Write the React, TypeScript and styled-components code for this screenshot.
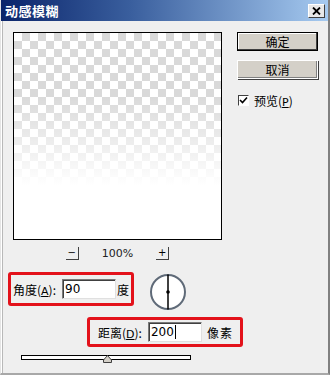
import React from "react";
import styled, { createGlobalStyle } from "styled-components";

const Global = createGlobalStyle`
  html, body { margin: 0; padding: 0; background: #efefef; }
  body { font-family: "Liberation Sans", "Noto Sans CJK SC", sans-serif; font-size: 12px; color: #000; }
`;

const Window = styled.div`
  width: 330px;
  height: 375px;
  box-sizing: border-box;
  background: #efefef;
  border-left: 1px solid #e4e4e4;
  border-right: 2px solid #808080;
  border-bottom: 2px solid #a8a8a8;
  box-shadow: inset 1px 0 0 #fff, inset 2px 0 0 #b8b8b8;
  display: flex;
  flex-direction: column;
  overflow: hidden;
`;

const TitleBar = styled.div`
  height: 21px;
  flex: none;
  margin-left: -1px;
  background: linear-gradient(to right, #0a246a 0%, #3a5f9e 40%, #a6caf0 100%);
  display: flex;
  align-items: center;
  justify-content: space-between;
  padding: 0 3px 0 5px;
`;

const Title = styled.span`
  color: #fff;
  font-family: "Noto Sans CJK SC", sans-serif;
  font-weight: 700;
  font-size: 13px;
  letter-spacing: 0.5px;
`;

const CloseBtn = styled.div`
  width: 15px;
  height: 12px;
  background: #e8e8e8;
  border: 1px solid;
  border-color: #fff #404040 #404040 #fff;
  display: flex;
  align-items: center;
  justify-content: center;
`;

const Body = styled.div`
  flex: 1;
  padding: 11px 0 0 12px;
  display: flex;
  flex-direction: column;
`;

const TopRow = styled.div`
  display: flex;
  align-items: flex-start;
`;

const PreviewCol = styled.div`
  width: 209px;
  display: flex;
  flex-direction: column;
`;

const Preview = styled.div`
  width: 209px;
  height: 208px;
  box-sizing: border-box;
  border: 1px solid #000;
  background:
    linear-gradient(to bottom, rgba(255,255,255,0) 0%, rgba(255,255,255,0) 30%, rgba(255,255,255,1) 74%),
    repeating-conic-gradient(#d9d9d9 0 25%, #ffffff 0 50%) 0 0 / 16px 16px;
`;

const ZoomRow = styled.div`
  display: flex;
  align-items: center;
  justify-content: center;
  gap: 23px;
  margin-top: 7px;
  height: 13px;
`;

const ZoomBtn = styled.div`
  width: 12px;
  height: 12px;
  border-right: 1px solid #404040;
  border-bottom: 1px solid #404040;
  font-family: "DejaVu Sans", sans-serif;
  font-size: 10px;
  line-height: 10px;
  display: flex;
  align-items: center;
  justify-content: center;
`;

const ZoomText = styled.span`
  font-family: "DejaVu Sans", sans-serif;
  font-size: 11px;
  color: #222;
`;

const SideCol = styled.div`
  margin-left: 15px;
  display: flex;
  flex-direction: column;
`;

const Button = styled.div<{ $def?: boolean }>`
  width: 81px;
  height: 19px;
  box-sizing: border-box;
  background: #d4d0c8;
  border: 1px solid ${(p) => (p.$def ? "#000" : "#fff")};
  box-shadow: ${(p) =>
    p.$def
      ? "inset -1px -1px 0 #404040, inset 1px 1px 0 #fff"
      : "1px 1px 0 #404040, inset -1px -1px 0 #808080"};
  display: flex;
  align-items: center;
  justify-content: center;
  font-family: "Noto Sans CJK SC", sans-serif;
  font-size: 12px;
  margin-bottom: 9px;
`;

const CheckRow = styled.label`
  display: flex;
  align-items: center;
  gap: 5px;
  margin-top: 4px;
  margin-left: 1px;
  font-family: "Noto Sans CJK SC", sans-serif;
  font-size: 12px;
`;

const CheckBox = styled.span`
  width: 11px;
  height: 11px;
  box-sizing: border-box;
  border: 1px solid;
  border-color: #404040 #fff #fff #404040;
  background: #fff;
  display: flex;
  align-items: center;
  justify-content: center;
`;

const U = styled.span`
  text-decoration: underline;
  font-family: "DejaVu Sans", sans-serif;
  font-size: 11px;
`;

const AngleRow = styled.div`
  display: flex;
  align-items: flex-start;
  margin-top: 12px;
  margin-left: -5px;
`;

const RedBox = styled.div<{ $w: number; $h: number; $pl: number }>`
  box-sizing: border-box;
  width: ${(p) => p.$w}px;
  height: ${(p) => p.$h}px;
  padding-left: ${(p) => p.$pl}px;
  border: 3px solid #e3121b;
  border-radius: 3px;
  display: flex;
  align-items: center;
  font-family: "Noto Sans CJK SC", sans-serif;
  font-size: 12px;
`;

const Label = styled.span<{ $ml?: number }>`
  white-space: nowrap;
  margin-left: ${(p) => p.$ml ?? 0}px;
`;

const Field = styled.div<{ $w: number; $ml: number }>`
  width: ${(p) => p.$w}px;
  margin-left: ${(p) => p.$ml}px;
  flex: none;
  height: 20px;
  box-sizing: border-box;
  background: #fff;
  border: 1px solid;
  border-color: #7a7a7a #e0e0e0 #e0e0e0 #7a7a7a;
  box-shadow: inset 1px 1px 0 #404040;
  display: flex;
  align-items: center;
  padding-left: 2px;
  font-family: "DejaVu Sans", sans-serif;
  font-size: 12px;
`;

const Caret = styled.span`
  display: inline-block;
  width: 1px;
  height: 14px;
  background: #000;
  margin-left: 1px;
`;

const Dial = styled.svg`
  margin-left: 15px;
  margin-top: 1px;
`;

const DistanceRow = styled.div`
  display: flex;
  margin-top: 6px;
  margin-left: 74px;
`;

const SliderWrap = styled.div`
  position: relative;
  margin-top: 8px;
  margin-left: 8px;
  width: 170px;
  height: 9px;
`;

const Track = styled.div`
  width: 170px;
  height: 5px;
  box-sizing: border-box;
  border: 1px solid #000;
  background: #fff;
`;

const Thumb = styled.svg`
  position: absolute;
  left: 82px;
  top: 0px;
`;

export default function App() {
  return (
    <>
      <Global />
      <Window>
        <TitleBar>
          <Title>动感模糊</Title>
          <CloseBtn>
            <svg width="9" height="8" viewBox="0 0 9 8">
              <path d="M1 0.5 L8 7.5 M8 0.5 L1 7.5" stroke="#000" strokeWidth="1.8" />
            </svg>
          </CloseBtn>
        </TitleBar>
        <Body>
          <TopRow>
            <PreviewCol>
              <Preview />
              <ZoomRow>
                <ZoomBtn>−</ZoomBtn>
                <ZoomText>100%</ZoomText>
                <ZoomBtn>+</ZoomBtn>
              </ZoomRow>
            </PreviewCol>
            <SideCol>
              <Button $def>确定</Button>
              <Button>取消</Button>
              <CheckRow>
                <CheckBox>
                  <svg width="9" height="9" viewBox="0 0 9 9">
                    <path d="M1 4 L3.5 6.5 L8 1.5" stroke="#000" strokeWidth="1.6" fill="none" />
                  </svg>
                </CheckBox>
                <span>
                  预览(<U>P</U>)
                </span>
              </CheckRow>
            </SideCol>
          </TopRow>
          <AngleRow>
            <RedBox $w={126} $h={34} $pl={2}>
              <Label>
                角度(<U>A</U>):
              </Label>
              <Field $w={54} $ml={6}>90</Field>
              <Label $ml={1}>度</Label>
            </RedBox>
            <Dial width="38" height="38" viewBox="0 0 38 38">
              <circle cx="19" cy="19" r="17" fill="#fff" stroke="#5f6a78" strokeWidth="2" />
              <line x1="19" y1="1.5" x2="19" y2="36.5" stroke="#000" strokeWidth="1.5" />
              <circle cx="19" cy="19" r="1.8" fill="#000" />
            </Dial>
          </AngleRow>
          <DistanceRow>
            <RedBox $w={156} $h={30} $pl={8}>
              <Label>
                距离(<U>D</U>):
              </Label>
              <Field $w={54} $ml={6}>
                200<Caret />
              </Field>
              <Label $ml={5} style={{ letterSpacing: 1 }}>像素</Label>
            </RedBox>
          </DistanceRow>
          <SliderWrap>
            <Track />
            <Thumb width="9" height="8" viewBox="0 0 9 8">
              <path d="M4.5 0.5 L8.5 5 L8.5 7.5 L0.5 7.5 L0.5 5 Z" fill="#d4d0c8" stroke="#404040" strokeWidth="1" />
            </Thumb>
          </SliderWrap>
        </Body>
      </Window>
    </>
  );
}
